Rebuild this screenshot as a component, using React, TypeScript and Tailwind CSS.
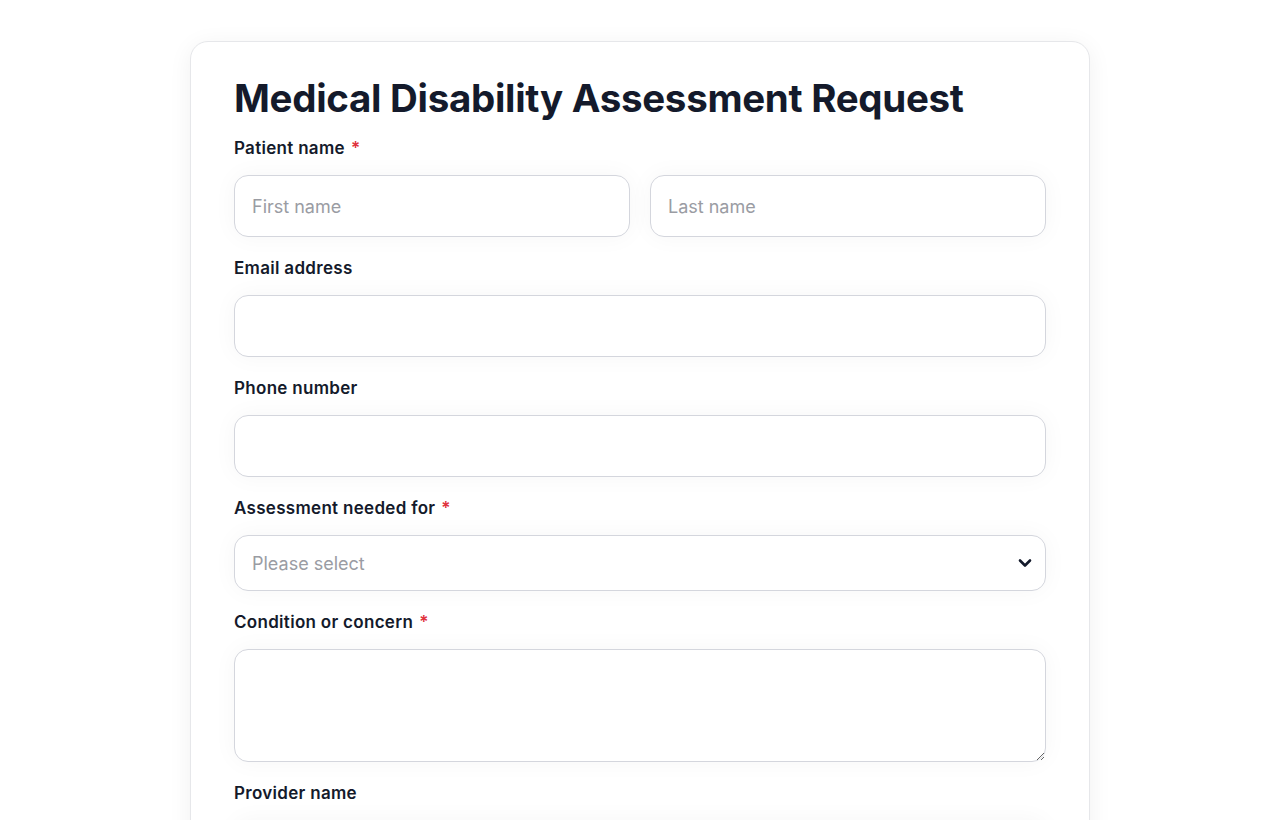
import React from 'react';

const inputCls =
  'w-full h-[62px] rounded-[14px] border border-[#d4d6dd] bg-white px-[17px] text-[18px] text-gray-900 placeholder:text-[#9a9ca3] outline-none shadow-[0_0_24px_rgba(15,23,42,0.04)]';

const Label: React.FC<{ text: string; required?: boolean }> = ({ text, required }) => (
  <label className="block h-[24px] leading-[24px] mb-[15px] text-[17px] font-semibold tracking-[0.3px] text-[#141a2b]">
    {text}
    {required && <span className="ml-[6px] text-[#e0323c]">*</span>}
  </label>
);

export default function App() {
  return (
    <div className="min-h-screen bg-white pt-[41px] pb-10" style={{ fontFamily: 'Inter, "Noto Sans", sans-serif' }}>
      <div className="mx-auto w-[900px] rounded-[18px] border border-[#e6e7ea] bg-white px-[43px] pt-[32px] pb-12 shadow-[0_4px_24px_rgba(15,23,42,0.06)]">
        <h1 className="h-[48px] leading-[48px] mb-[14px] text-[38.5px] font-bold tracking-[-0.3px] text-[#141a2b]">
          Medical Disability Assessment Request
        </h1>

        <div className="flex flex-col gap-[19px]">
          <div>
            <Label text="Patient name" required />
            <div className="grid grid-cols-2 gap-[20px]">
              <input className={inputCls} placeholder="First name" />
              <input className={inputCls} placeholder="Last name" />
            </div>
          </div>

          <div>
            <Label text="Email address" />
            <input className={inputCls} type="email" />
          </div>

          <div>
            <Label text="Phone number" />
            <input className={inputCls} type="tel" />
          </div>

          <div>
            <Label text="Assessment needed for" required />
            <div className="relative">
              <select
                className="w-full h-[56px] appearance-none rounded-[14px] border border-[#d4d6dd] bg-white px-[17px] text-[18px] text-[#9a9ca3] outline-none shadow-[0_0_24px_rgba(15,23,42,0.04)]"
                defaultValue=""
              >
                <option value="" disabled>
                  Please select
                </option>
                <option>Work disability</option>
                <option>Insurance claim</option>
                <option>Other</option>
              </select>
              <svg
                className="pointer-events-none absolute right-[13px] top-1/2 -translate-y-1/2"
                width="16"
                height="16"
                viewBox="0 0 16 16"
                fill="none"
              >
                <path d="M3 5.5l5 5 5-5" stroke="#141a2b" strokeWidth="2.6" strokeLinecap="round" strokeLinejoin="round" />
              </svg>
            </div>
          </div>

          <div>
            <Label text="Condition or concern" required />
            <textarea
              className="block w-full h-[113px] rounded-[14px] border border-[#d4d6dd] bg-white px-[17px] py-3 text-[18px] text-gray-900 outline-none shadow-[0_0_24px_rgba(15,23,42,0.04)]"
            />
          </div>

          <div>
            <Label text="Provider name" />
            <input className={inputCls} />
          </div>

          <div>
            <Label text="Preferred date" />
            <input className={inputCls} />
          </div>
        </div>
      </div>
    </div>
  );
}
